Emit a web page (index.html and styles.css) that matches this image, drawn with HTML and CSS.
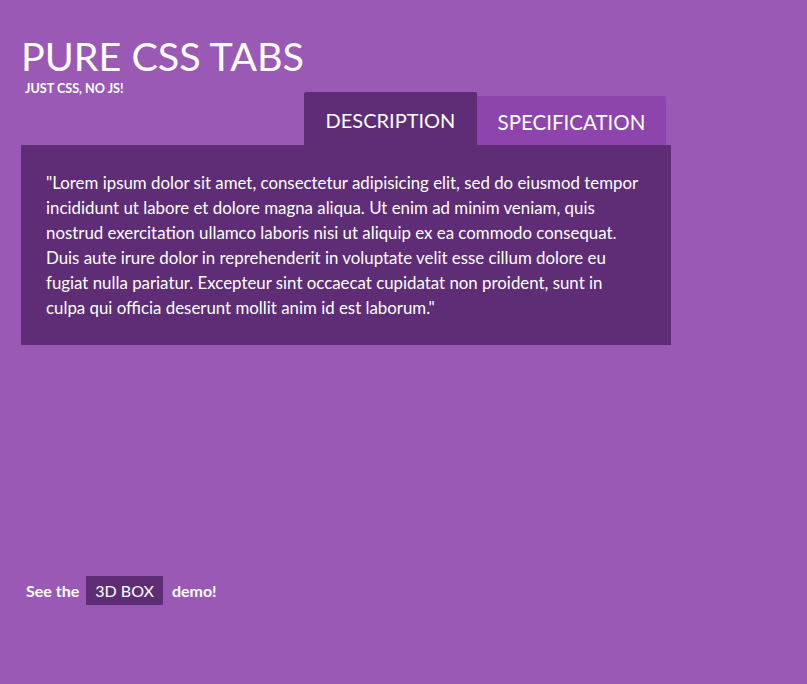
FILE: index.html
```html
<!DOCTYPE html>
<html>
<head>
<meta charset="utf-8">
<link rel="stylesheet" href="styles.css">
</head>
<body>
<div class="page">
  <header class="head">
    <h1 class="title">PURE CSS TABS</h1>
    <p class="subtitle">JUST CSS, NO JS!</p>
  </header>
  <section class="tabs">
    <div class="tab-row">
      <div class="tab tab-active">DESCRIPTION</div>
      <div class="tab tab-idle">SPECIFICATION</div>
    </div>
    <div class="panel">
      <p class="panel-text">"Lorem ipsum dolor sit amet, consectetur adipisicing elit, sed do eiusmod tempor incididunt ut labore et dolore magna aliqua. Ut enim ad minim veniam, quis nostrud exercitation ullamco laboris nisi ut aliquip ex ea commodo consequat. Duis aute irure dolor in reprehenderit in voluptate velit esse cillum dolore eu fugiat nulla pariatur. Excepteur sint occaecat cupidatat non proident, sunt in culpa qui officia deserunt mollit anim id est laborum."</p>
    </div>
  </section>
  <footer class="foot">
    <span class="foot-text">See the</span>
    <span class="foot-link">3D BOX</span>
    <span class="foot-text">demo!</span>
  </footer>
</div>
</body>
</html>
```
FILE: styles.css
```css
html, body {
  margin: 0;
  padding: 0;
  background: #9b59b6;
  height: 100%;
}
body {
  font-family: Lato, "Open Sans", sans-serif;
  color: #fff;
}
.page {
  padding: 32px 0 0 21px;
  width: 650px;
}
.title {
  margin: 0;
  font-size: 39.5px;
  font-weight: 400;
  line-height: 48px;
}
.subtitle {
  margin: 2px 0 0 4px;
  font-size: 12.6px;
  font-weight: 700;
  line-height: 14px;
}
.tabs {
  margin-top: -4px;
}
.tab-row {
  display: flex;
  align-items: flex-end;
  padding-left: 283px;
}
.tab {
  font-size: 20px;
  text-align: center;
  box-sizing: border-box;
}
.tab-active {
  background: #5e2d75;
  width: 173px;
  height: 53px;
  padding-top: 16px;
  border-radius: 2px 2px 0 0;
}
.tab-idle {
  background: #8e44ad;
  width: 189px;
  height: 49px;
  padding-top: 14px;
  font-size: 20.5px;
  border-radius: 2px 2px 0 0;
}
.panel {
  background: #5e2d75;
  padding: 25px;
}
.panel-text {
  margin: 0;
  max-width: 595px;
  font-size: 16.85px;
  line-height: 25px;
  color: #fff;
}
.foot {
  margin-top: 231px;
  padding-left: 5px;
  display: flex;
  align-items: center;
  gap: 7px;
  font-size: 16px;
}
.foot-text {
  font-weight: 700;
}
.foot-link {
  background: #5e2d75;
  padding: 5px 9px;
  margin-right: 2px;
  line-height: 19px;
}
```
